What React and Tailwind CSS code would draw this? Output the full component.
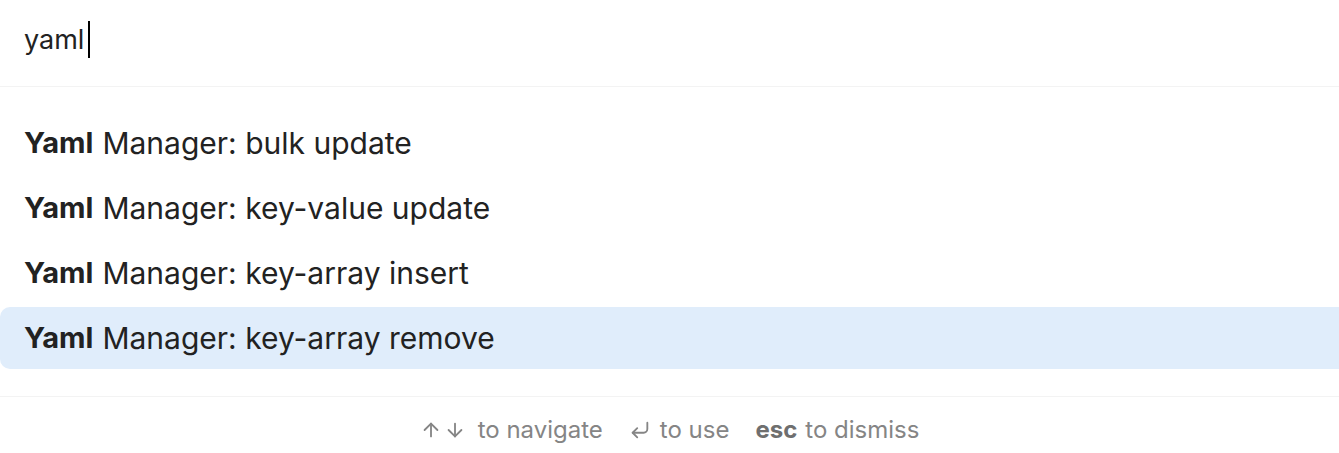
import { ArrowUp, ArrowDown, CornerDownLeft } from "lucide-react";

const suggestions = [
  "bulk update",
  "key-value update",
  "key-array insert",
  "key-array remove",
];

export default function App() {
  const selected = 3;

  return (
    <div
      className="h-[453px] w-[1339px] overflow-hidden bg-white text-[#222222]"
      style={{ fontFamily: "Inter, 'Noto Sans', sans-serif" }}
    >
      <div className="flex h-[87px] items-center border-b border-[#f3f3f3] px-6 pb-[8px]">
        <span className="text-[27px] leading-none">yaml</span>
        <span className="ml-[4px] h-[37px] w-[2px] bg-black" />
      </div>

      <div className="flex flex-col gap-[3px] pb-[27px] pt-[25px]">
        {suggestions.map((item, i) => (
          <div
            key={item}
            className={
              "flex h-[62px] items-center rounded-l-[10px] px-6 text-[30px] " +
              (i === selected ? "bg-[#e0edfb]" : "")
            }
          >
            <span className="font-bold text-[29px]">Yaml</span>
            <span className="ml-[9px]">Manager: {item}</span>
          </div>
        ))}
      </div>

      <div className="flex h-[56px] items-center justify-center gap-[26px] border-t border-[#f3f3f3] pt-[10px] text-[24px] text-[#858585]">
        <span className="flex items-center gap-[12px]">
          <span className="flex items-center gap-[2px]">
            <ArrowUp size={22} strokeWidth={2} />
            <ArrowDown size={22} strokeWidth={2} />
          </span>
          to navigate
        </span>
        <span className="flex items-center gap-[9px]">
          <CornerDownLeft size={22} strokeWidth={2} />
          to use
        </span>
        <span className="flex items-center gap-[8px]">
          <span className="font-bold text-[#6f6f6f]">esc</span>
          to dismiss
        </span>
      </div>
    </div>
  );
}
